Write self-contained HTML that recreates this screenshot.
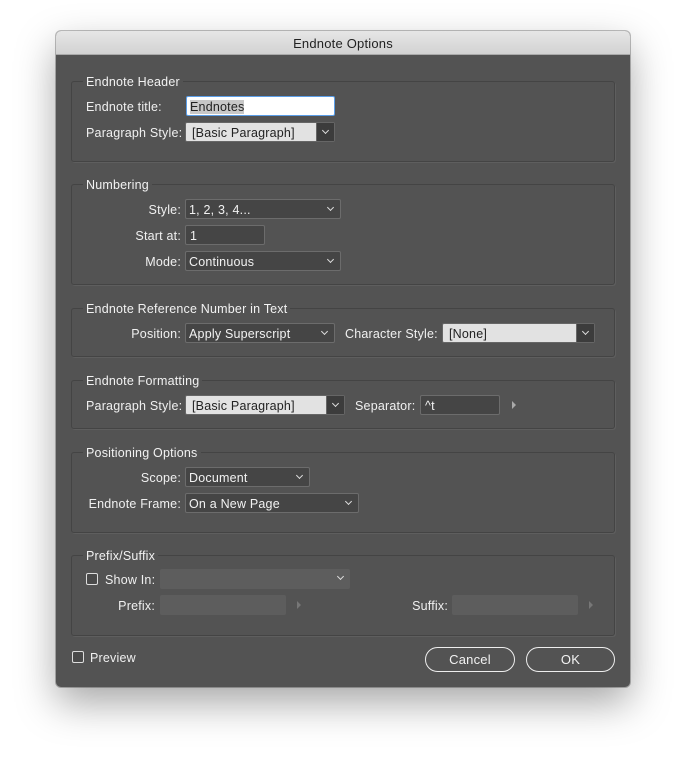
<!DOCTYPE html>
<html><head><style>
*{box-sizing:border-box;margin:0;padding:0}
body{width:686px;height:767px;background:#fff;position:relative;overflow:hidden;font-family:"Liberation Sans",sans-serif;font-size:12.5px;color:#eee;letter-spacing:0.2px}
.dlg{position:absolute;left:56px;top:31px;width:574px;height:656px;background:#535353;border-radius:5px;box-shadow:0 16px 40px rgba(0,0,0,.35),0 0 0 1px rgba(0,0,0,.25);overflow:hidden}
.tb{position:absolute;left:0;top:0;width:574px;height:24px;background:linear-gradient(#e6e6e6,#d2d2d2);border-bottom:1px solid #aaa;color:#222;font-size:13px;text-align:center;line-height:25px}
.a{position:absolute;white-space:nowrap}
.g{position:absolute;border:1px solid #444;border-radius:3px;box-shadow:1px 1px 0 #5e5e5e}
.lg{position:absolute;background:#535353;padding:0 3px;font-size:12.5px;color:#f2f2f2;line-height:14px;margin-top:1px}
.lb{position:absolute;text-align:right;line-height:22px;color:#f0f0f0}
.dd{position:absolute;height:20px;background:#454545;border:1px solid #6c6c6c;border-radius:2px;line-height:20px;padding-left:3px;color:#f2f2f2}
.dd:after{content:"";position:absolute;right:7px;top:5px;width:4px;height:4px;border-right:1px solid #ddd;border-bottom:1px solid #ddd;transform:rotate(45deg)}
.cb{position:absolute;height:20px;background:#e2e2e2;border:1px solid #666;border-radius:2px;line-height:20px;padding-left:6px;color:#222}
.cb i{position:absolute;right:0;top:0;width:18px;height:18px;background:#3c3c3c;border-left:1px solid #666}
.cb i:after{content:"";position:absolute;left:6px;top:5px;width:4px;height:4px;border-right:1px solid #ddd;border-bottom:1px solid #ddd;transform:rotate(45deg)}
.in{position:absolute;height:20px;background:#454545;border:1px solid #6c6c6c;border-radius:2px;line-height:20px;padding-left:5px;color:#f2f2f2}
.tri{position:absolute;width:0;height:0;border-left:4px solid #aaa;border-top:4px solid transparent;border-bottom:4px solid transparent}
.chk{position:absolute;width:12px;height:12px;border:1px solid #ddd;border-radius:2px;background:#4a4a4a}
.btn{position:absolute;height:25px;border:1.5px solid #eee;border-radius:13px;text-align:center;line-height:24px;color:#f2f2f2;font-size:13px}
.dis{background:#5d5d5d;border:none}
</style></head><body>
<div class="dlg">
<div class="tb">Endnote Options</div>
</div>
<div class="g" style="left:71px;top:81px;width:544px;height:81px"></div>
<div class="lg" style="left:83px;top:74px">Endnote Header</div>
<div class="lb" style="top:96px;text-align:left;left:86px">Endnote title:</div>
<div class="a" style="left:186px;top:96px;width:149px;height:20px;background:#fff;border:1px solid #5b9ee8;border-radius:2px;line-height:20px;padding-left:3px;color:#222"><span style="background:#c8c8c8">Endnotes</span></div>
<div class="lb" style="left:86px;top:122px;text-align:left">Paragraph Style:</div>
<div class="cb" style="left:185px;top:122px;width:150px">[Basic Paragraph]<i></i></div>

<div class="g" style="left:71px;top:184px;width:544px;height:101px"></div>
<div class="lg" style="left:83px;top:177px">Numbering</div>
<div class="lb" style="left:80px;width:101px;top:199px">Style:</div>
<div class="dd" style="left:185px;top:199px;width:156px">1, 2, 3, 4...</div>
<div class="lb" style="left:80px;width:101px;top:225px">Start at:</div>
<div class="in" style="left:185px;top:225px;width:80px;padding-left:4px">1</div>
<div class="lb" style="left:80px;width:101px;top:251px">Mode:</div>
<div class="dd" style="left:185px;top:251px;width:156px">Continuous</div>

<div class="g" style="left:71px;top:308px;width:544px;height:49px"></div>
<div class="lg" style="left:83px;top:301px">Endnote Reference Number in Text</div>
<div class="lb" style="left:80px;width:101px;top:323px">Position:</div>
<div class="dd" style="left:185px;top:323px;width:150px">Apply Superscript</div>
<div class="lb" style="left:345px;top:323px;text-align:left">Character Style:</div>
<div class="cb" style="left:442px;top:323px;width:153px">[None]<i></i></div>

<div class="g" style="left:71px;top:380px;width:544px;height:49px"></div>
<div class="lg" style="left:83px;top:373px">Endnote Formatting</div>
<div class="lb" style="left:86px;top:395px;text-align:left">Paragraph Style:</div>
<div class="cb" style="left:185px;top:395px;width:160px">[Basic Paragraph]<i></i></div>
<div class="lb" style="left:355px;top:395px;text-align:left">Separator:</div>
<div class="in" style="left:420px;top:395px;width:80px;padding-left:4px">^t</div>
<div class="tri" style="left:512px;top:401px"></div>

<div class="g" style="left:71px;top:452px;width:544px;height:81px"></div>
<div class="lg" style="left:83px;top:445px">Positioning Options</div>
<div class="lb" style="left:80px;width:101px;top:467px">Scope:</div>
<div class="dd" style="left:185px;top:467px;width:125px">Document</div>
<div class="lb" style="left:80px;width:101px;top:493px">Endnote Frame:</div>
<div class="dd" style="left:185px;top:493px;width:174px">On a New Page</div>

<div class="g" style="left:71px;top:555px;width:544px;height:81px"></div>
<div class="lg" style="left:83px;top:548px">Prefix/Suffix</div>
<div class="chk" style="left:86px;top:573px"></div>
<div class="lb" style="left:105px;top:569px;text-align:left">Show In:</div>
<div class="dd dis" style="left:160px;top:569px;width:190px"></div>
<div class="lb" style="left:80px;width:75px;top:595px">Prefix:</div>
<div class="in dis" style="left:160px;top:595px;width:126px"></div>
<div class="tri" style="left:297px;top:601px;border-left-color:#777"></div>
<div class="lb" style="left:400px;width:48px;top:595px">Suffix:</div>
<div class="in dis" style="left:452px;top:595px;width:126px"></div>
<div class="tri" style="left:589px;top:601px;border-left-color:#777"></div>

<div class="chk" style="left:72px;top:651px"></div>
<div class="lb" style="left:90px;top:647px;text-align:left">Preview</div>
<div class="btn" style="left:425px;top:647px;width:90px">Cancel</div>
<div class="btn" style="left:526px;top:647px;width:89px">OK</div>
</body></html>
